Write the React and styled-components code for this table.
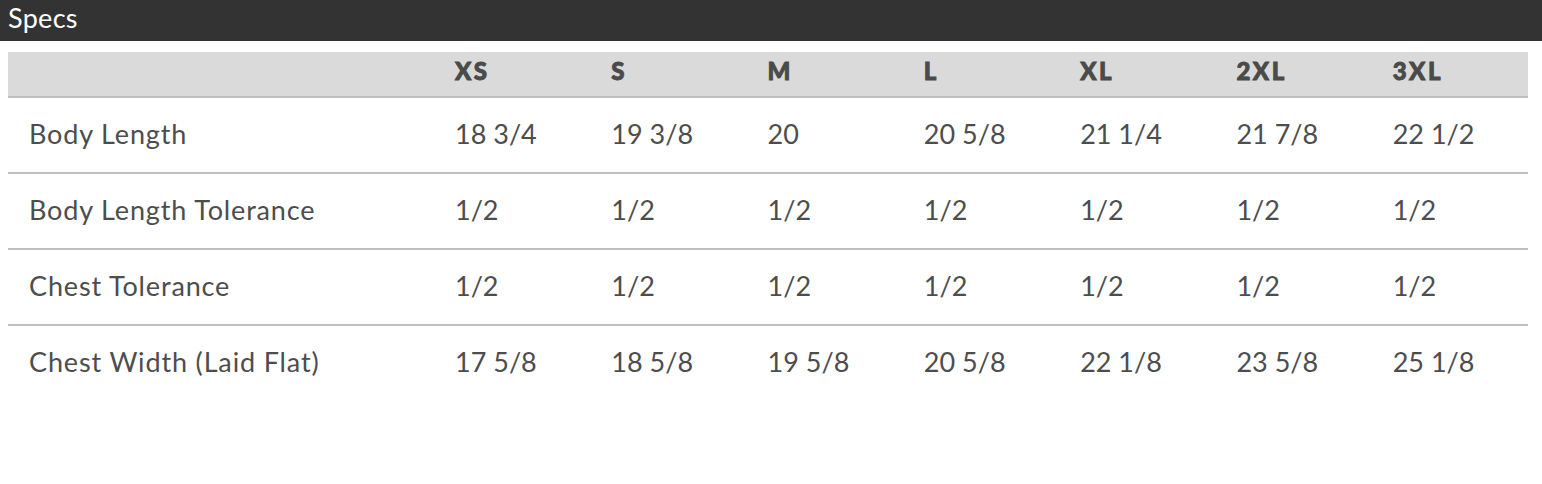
import React from 'react';
import styled, { createGlobalStyle } from 'styled-components';

const sizes = ['XS', 'S', 'M', 'L', 'XL', '2XL', '3XL'];

const specs = [
  { label: 'Body Length', values: ['18 3/4', '19 3/8', '20', '20 5/8', '21 1/4', '21 7/8', '22 1/2'] },
  { label: 'Body Length Tolerance', values: ['1/2', '1/2', '1/2', '1/2', '1/2', '1/2', '1/2'] },
  { label: 'Chest Tolerance', values: ['1/2', '1/2', '1/2', '1/2', '1/2', '1/2', '1/2'] },
  { label: 'Chest Width (Laid Flat)', values: ['17 5/8', '18 5/8', '19 5/8', '20 5/8', '22 1/8', '23 5/8', '25 1/8'] },
];

const GlobalStyle = createGlobalStyle`
  body {
    margin: 0;
    background: #fff;
    font-family: Lato, "Open Sans", sans-serif;
    color: #4a4a4a;
  }
`;

const TitleBar = styled.div`
  height: 41px;
  background: #333333;
  color: #fff;
  font-size: 27px;
  line-height: 36px;
  padding-left: 8px;
  letter-spacing: 0.3px;
`;

const Table = styled.table`
  margin: 11px 14px 0 8px;
  width: 1520px;
  border-collapse: collapse;
  table-layout: fixed;
`;

const HeadRow = styled.tr`
  background: #dadada;
  border-bottom: 2px solid #bfbfbf;
`;

const HeadCell = styled.th`
  height: 36px;
  padding: 0 0 8px 21px;
  text-align: left;
  font-weight: 900;
  font-size: 24px;
  letter-spacing: 2.5px;
  -webkit-text-stroke: 0.9px #4a4a4a;
  color: #4a4a4a;
  width: ${(p) => (p.$first ? '405px' : 'auto')};
`;

const BodyRow = styled.tr`
  border-bottom: 2px solid ${(p) => (p.$last ? 'transparent' : '#bfbfbf')};
`;

const Cell = styled.td`
  height: 70px;
  padding: 0 0 4px 21px;
  font-size: 27px;
  letter-spacing: ${(p) => (p.$label ? '0.85px' : '0')};
  color: #4d4d4d;
  white-space: nowrap;
`;

export default function App() {
  return (
    <>
      <GlobalStyle />
      <TitleBar>Specs</TitleBar>
      <Table>
        <thead>
          <HeadRow>
            <HeadCell $first />
            {sizes.map((s) => (
              <HeadCell key={s}>{s}</HeadCell>
            ))}
          </HeadRow>
        </thead>
        <tbody>
          {specs.map((row, i) => (
            <BodyRow key={row.label} $last={i === specs.length - 1}>
              <Cell $label>{row.label}</Cell>
              {row.values.map((v, j) => (
                <Cell key={j}>{v}</Cell>
              ))}
            </BodyRow>
          ))}
        </tbody>
      </Table>
    </>
  );
}
